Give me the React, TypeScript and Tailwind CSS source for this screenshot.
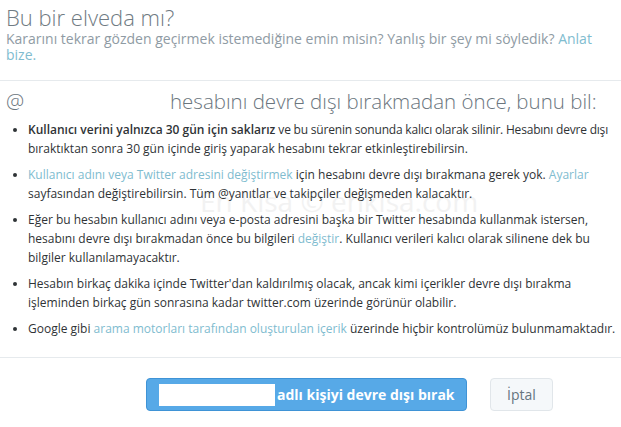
const font = { fontFamily: '"Open Sans", "Noto Sans", sans-serif' };

const Link = ({ children }: { children: React.ReactNode }) => (
  <a className="text-[#80bccf]">{children}</a>
);

export default function App() {
  return (
    <div
      className="relative w-[621px] h-[427px] overflow-hidden bg-white text-[#333]"
      style={font}
    >
      {/* faint watermark sits behind the content */}
      <div className="pointer-events-none absolute left-[200px] top-[180px] text-[28px] text-[#f2f2f2]">
        En Kısa © enkisa.com
      </div>
      <div className="relative">
        <div className="pl-[6px] pr-[4px] pt-[3px] pb-[17px]">
          <h1 className="text-[22px] font-light leading-[28px] text-[#707b83]">
            Bu bir elveda mı?
          </h1>
          <p className="text-[14px] leading-[16px] text-[#8f9ba4]">
            Kararını tekrar gözden geçirmek istemediğine emin misin? Yanlış bir
            şey mi söyledik? <Link>Anlat bize.</Link>
          </p>
        </div>
        <div className="border-t border-[#e6eaed]" />
        <div className="pl-[6px] pt-[7px]">
          <h2 className="flex text-[20.5px] font-light leading-[26px] text-[#6b767e]">
            <span className="w-[164px]">@</span>
            <span>hesabını devre dışı bırakmadan önce, bunu bil:</span>
          </h2>
          <ul className="mt-[6px] pl-[22px] list-disc whitespace-nowrap text-[12px] leading-[19px] text-[#2f3336] flex flex-col gap-[7px]">
            <li>
              <b className="font-semibold">
                Kullanıcı verini yalnızca 30 gün için saklarız
              </b>{" "}
              <span className="tracking-[-0.2px]">
                ve bu sürenin sonunda kalıcı olarak silinir. Hesabını devre dışı
              </span>
              <br />
              bıraktıktan sonra 30 gün içinde giriş yaparak hesabını tekrar
              etkinleştirebilirsin.
            </li>
            <li>
              <Link>Kullanıcı adını veya Twitter adresini değiştirmek</Link>{" "}
              için hesabını devre dışı bırakmana gerek yok.{" "}
              <Link>Ayarlar</Link>
              <br />
              sayfasından değiştirebilirsin. Tüm @yanıtlar ve takipçiler
              değişmeden kalacaktır.
            </li>
            <li>
              Eğer bu hesabın kullanıcı adını veya e-posta adresini başka bir
              Twitter hesabında kullanmak istersen,
              <br />
              hesabını devre dışı bırakmadan önce bu bilgileri{" "}
              <Link>değiştir</Link>. Kullanıcı verileri kalıcı olarak silinene
              dek bu
              <br />
              bilgiler kullanılamayacaktır.
            </li>
            <li>
              Hesabın birkaç dakika içinde Twitter'dan kaldırılmış olacak, ancak
              kimi içerikler devre dışı bırakma
              <br />
              işleminden birkaç gün sonrasına kadar twitter.com üzerinde
              görünür olabilir.
            </li>
            <li>
              Google gibi{" "}
              <Link>arama motorları tarafından oluşturulan içerik</Link>{" "}
              üzerinde hiçbir kontrolümüz bulunmamaktadır.
            </li>
          </ul>
        </div>
        <div className="mt-[19px] border-t border-[#e6eaed]" />
        <div className="flex items-center pl-[146px] pt-[20px] gap-[23px]">
          <button className="flex h-[33px] w-[321px] items-center gap-[2px] rounded-[4px] border border-[#3f93d6] bg-[#57a9e7] pl-[12px] text-[14px] font-bold text-white">
            <span className="h-[22px] w-[116px] bg-white" />
            <span>adlı kişiyi devre dışı bırak</span>
          </button>
          <button className="h-[33px] w-[63px] rounded-[4px] border border-[#e1e6ea] bg-[#f5f8fa] text-[14px] text-[#66757f]">
            İptal
          </button>
        </div>
      </div>
    </div>
  );
}
